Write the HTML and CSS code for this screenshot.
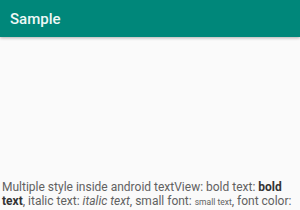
FILE: index.html
```html
<!DOCTYPE html>
<html>
<head>
<meta charset="utf-8">
<link rel="stylesheet" href="styles.css">
</head>
<body>
<div class="app">
  <header class="appbar"><span class="title">Sample</span></header>
  <main class="content">
    <p class="demo">Multiple style inside android textView: bold text: <b>bold text</b>, italic text: <i>italic text</i>, small font: <small>small text</small>, font color: <span class="muted">colored text, </span><span class="green">green colored text</span>, more text</p>
  </main>
</div>
</body>
</html>
```
FILE: styles.css
```css
html, body {
  margin: 0;
  padding: 0;
  background: #fafafa;
  overflow: hidden;
}
.app {
  width: 300px;
  height: 210px;
  overflow: hidden;
  display: flex;
  flex-direction: column;
  font-family: Roboto, "Noto Sans", sans-serif;
}
.appbar {
  height: 37px;
  background: #00877a;
  display: flex;
  align-items: center;
  padding-left: 10px;
  box-shadow: 0 1px 3px rgba(0,0,0,0.3);
  flex-shrink: 0;
}
.title {
  color: #eef8f6;
  font-size: 15px;
  font-weight: 500;
}
.content {
  padding: 143px 0 0 2px;
}
.demo {
  margin: 0;
  font-size: 12px;
  line-height: 14px;
  color: #616161;
}
.demo b { color: #333; }
.demo small { font-size: 8.5px; }
.green { color: #4caf50; }
```
